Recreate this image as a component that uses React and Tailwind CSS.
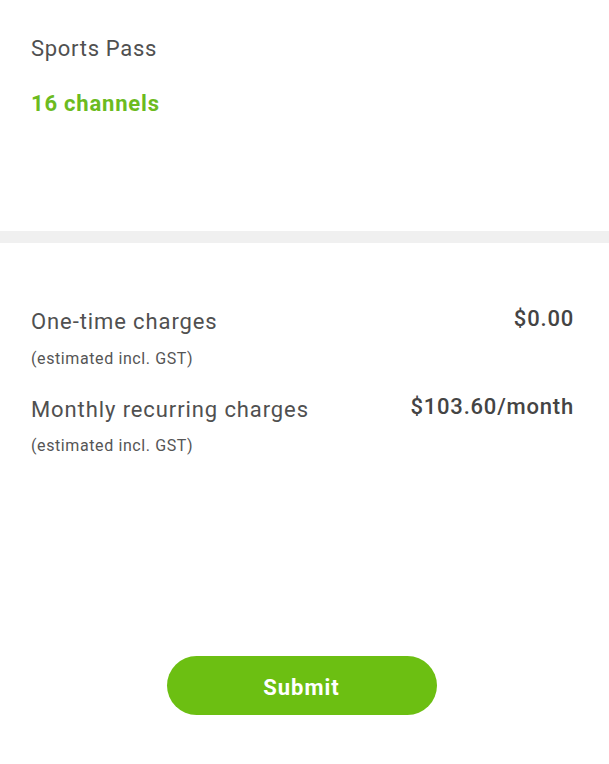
export default function App() {
  return (
    <div className="w-[609px] h-[764px] bg-white flex flex-col text-[#4a4a4a]" style={{ fontFamily: "Roboto, 'Liberation Sans', sans-serif" }}>
      <div className="px-[31px] pt-[34px] h-[231px]">
        <div className="text-[22px] leading-[30px] tracking-[0.7px] text-[#505050]">Sports Pass</div>
        <div className="mt-[26px] text-[22px] leading-[28px] tracking-[0.8px] font-bold text-[#6cbb1f]">16 channels</div>
      </div>
      <div className="h-[12px] bg-[#f0f0f0]" />
      <div className="pr-[35px] pl-[31px] pt-[64px] flex flex-col">
        <div className="flex justify-between items-start">
          <div className="text-[22px] leading-[30px] tracking-[0.9px] text-[#505050]">One-time charges</div>
          <div className="-mt-[1px] text-[22px] leading-[26px] tracking-[0.8px] font-medium text-[#444]">$0.00</div>
        </div>
        <div className="mt-[12px] text-[16px] leading-[20px] tracking-[0.6px] text-[#555]">(estimated incl. GST)</div>
        <div className="mt-[26px] flex justify-between items-start">
          <div className="text-[22px] leading-[30px] tracking-[0.9px] text-[#505050]">Monthly recurring charges</div>
          <div className="-mt-[1px] text-[22px] leading-[26px] tracking-[0.8px] font-medium text-[#444]">$103.60/month</div>
        </div>
        <div className="mt-[11px] text-[16px] leading-[20px] tracking-[0.6px] text-[#555]">(estimated incl. GST)</div>
      </div>
      <div className="flex-1" />
      <div className="flex justify-center pb-[49px] pr-[6px]">
        <button className="w-[270px] h-[59px] pt-[3px] rounded-full bg-[#6cbf12] text-white text-[22px] tracking-[1px] font-bold">Submit</button>
      </div>
    </div>
  );
}
